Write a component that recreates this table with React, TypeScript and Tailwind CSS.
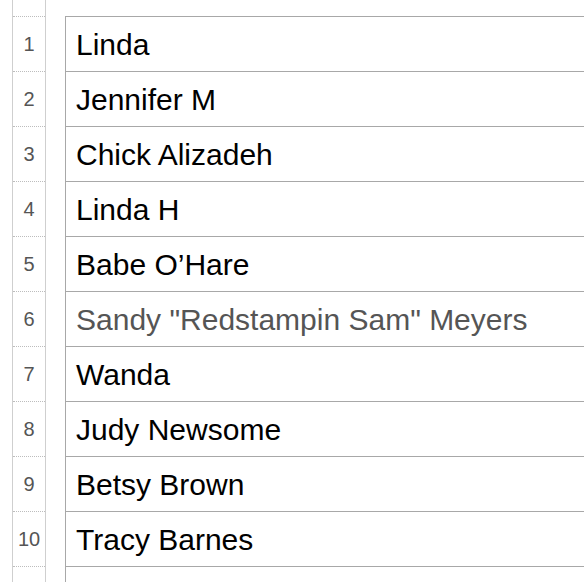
import React from 'react';

const names = [
  'Linda',
  'Jennifer M',
  'Chick Alizadeh',
  'Linda H',
  'Babe O’Hare',
  'Sandy "Redstampin Sam" Meyers',
  'Wanda',
  'Judy Newsome',
  'Betsy Brown',
  'Tracy Barnes',
];

const App: React.FC = () => {
  return (
    <div className="h-[582px] w-[584px] overflow-hidden bg-white flex font-['Liberation_Sans',Arial,sans-serif]">
      {/* row number gutter */}
      <div className="ml-[12px] w-[34px] shrink-0 border-x border-[#cfcfcf] flex flex-col">
        <div className="h-[16px] shrink-0" />
        {names.map((_, i) => (
          <div
            key={i}
            className="h-[55px] shrink-0 border-t border-dotted border-[#bdbdbd] flex items-center justify-center text-[20px] text-[#555]"
          >
            {i + 1}
          </div>
        ))}
        <div className="h-[55px] shrink-0 border-t border-dotted border-[#bdbdbd]" />
      </div>

      {/* sheet */}
      <div className="ml-[19px] mt-[16px] w-[600px] shrink-0 border-l border-t border-[#a8a8a8] flex flex-col">
        {names.map((name, i) => (
          <div
            key={name}
            className={`h-[55px] shrink-0 border-b border-[#a8a8a8] flex items-center pl-[10px] pt-[1px] text-[30px] whitespace-nowrap ${
              i === 5 ? 'text-[#555]' : 'text-black'
            }`}
          >
            {name}
          </div>
        ))}
        <div className="h-[55px] shrink-0" />
      </div>
    </div>
  );
};

export default App;
